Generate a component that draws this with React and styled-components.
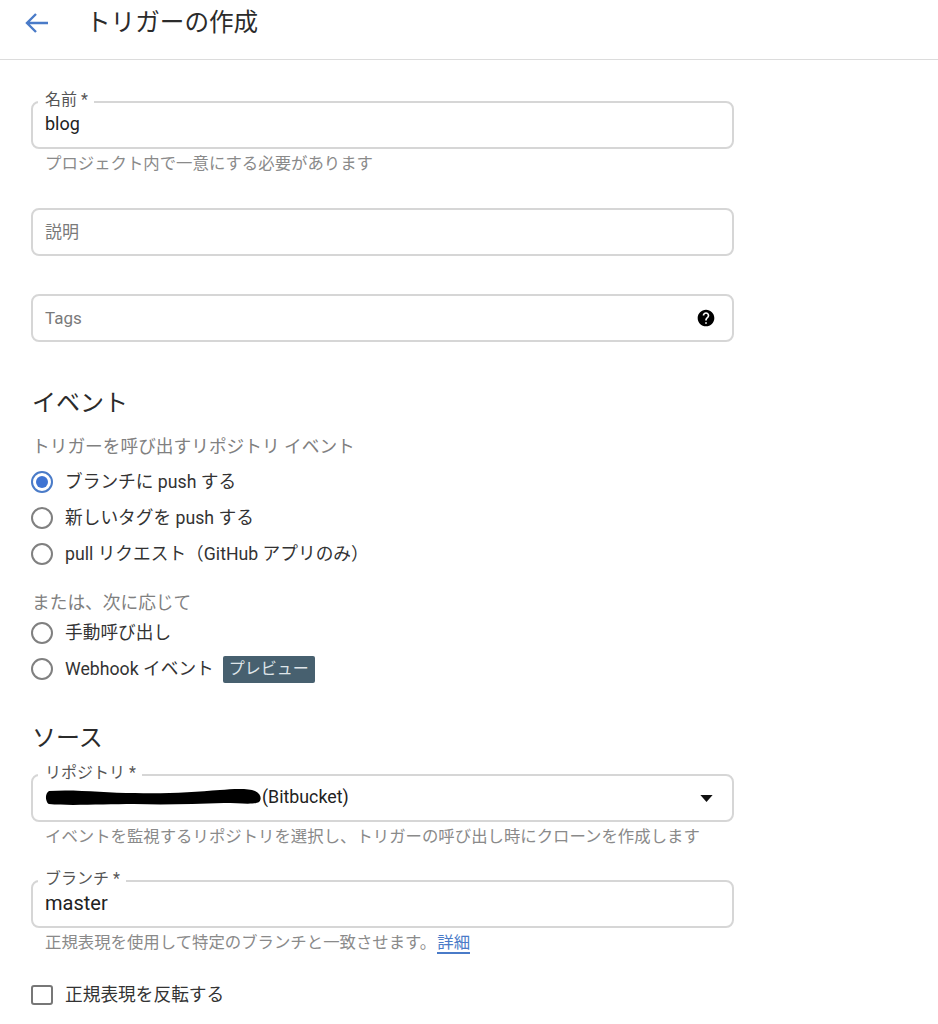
import styled, { createGlobalStyle } from "styled-components";

const GlobalStyle = createGlobalStyle`
  html, body {
    margin: 0;
    background: #fff;
    font-family: Roboto, "Noto Sans CJK JP", sans-serif;
    color: #202124;
  }
`;

const Page = styled.div`
  width: 938px;
  height: 1024px;
  overflow: hidden;
`;

const Header = styled.header`
  height: 60px;
  display: flex;
  align-items: center;
  padding: 0 0 14px 24px;
  box-sizing: border-box;
  border-bottom: 1px solid #dcdcdc;
`;

const BackButton = styled.button`
  width: 26px;
  height: 24px;
  padding: 0;
  border: none;
  background: none;
  color: #4a7bc8;
  display: flex;
  margin-right: 36px;
`;

const Title = styled.h1`
  margin: 0;
  font-size: 24.6px;
  font-weight: 400;
  line-height: 32px;
  color: #2b2b2b;
`;

const Content = styled.main`
  width: 703px;
  margin-left: 31px;
  padding-top: 41px;
`;

const Field = styled.div`
  position: relative;
  height: 48px;
  box-sizing: border-box;
  margin-top: ${({ $top }) => $top || 0}px;
  border: 2px solid #d6d6d6;
  border-radius: 8px;
  display: flex;
  align-items: center;
  justify-content: space-between;
  padding: 0 14px 0 12px;
`;

const FloatLabel = styled.label`
  position: absolute;
  top: -13px;
  left: 5px;
  padding: 0 6px 0 7px;
  background: #fff;
  font-size: 16px;
  line-height: 20px;
  color: #555;
`;

const Value = styled.span`
  display: flex;
  align-items: center;
  font-size: ${({ $size }) => $size}px;
  line-height: 24px;
  color: #222;
  margin-top: -2px;
`;

const Placeholder = styled.span`
  font-size: 17px;
  line-height: 24px;
  color: #7a7a7a;
`;

const Helper = styled.div`
  margin: 4px 0 0 14px;
  font-size: 16.4px;
  line-height: 22px;
  color: #8a8a8a;
`;

const DocLink = styled.a`
  color: #4a7bc8;
  border-bottom: 2px solid #4a7bc8;
  margin-left: 1px;
`;

const SectionTitle = styled.h2`
  margin: ${({ $top }) => $top}px 0 0 1px;
  font-size: 24px;
  font-weight: 400;
  line-height: 32px;
  color: #2b2b2b;
`;

const GroupLabel = styled.div`
  margin: ${({ $top }) => $top}px 0 0 1px;
  font-size: 17.7px;
  line-height: 22px;
  color: #808080;
`;

const OptionList = styled.div`
  display: flex;
  flex-direction: column;
  gap: 14px;
  margin-top: ${({ $top }) => $top}px;
`;

const Option = styled.div`
  display: flex;
  align-items: center;
  height: 22px;
  font-size: 17.7px;
  color: #333;
`;

const Radio = styled.span`
  width: 22px;
  height: 22px;
  box-sizing: border-box;
  border-radius: 50%;
  border: 2px solid ${({ $checked }) => ($checked ? "#4a7bc8" : "#808080")};
  margin-right: 12px;
  flex-shrink: 0;
  display: flex;
  align-items: center;
  justify-content: center;

  &::after {
    content: "";
    display: ${({ $checked }) => ($checked ? "block" : "none")};
    width: 12px;
    height: 12px;
    border-radius: 50%;
    background: #3f74d3;
  }
`;

const OptionText = styled.span`
  margin-top: -5px;
`;

const Badge = styled.span`
  margin-left: 9px;
  height: 27px;
  width: 92px;
  box-sizing: border-box;
  background: #47606f;
  border-radius: 2px;
  color: #dfe5e9;
  font-size: 16px;
  line-height: 25px;
  text-align: center;
`;

const CheckRow = styled(Option)`
  margin-top: 30px;
`;

const Checkbox = styled.span`
  width: 22px;
  height: 20px;
  box-sizing: border-box;
  border: 2px solid #777;
  border-radius: 3px;
  margin-right: 12px;
`;

const Redaction = styled.svg`
  width: 217px;
  height: 18px;
  flex-shrink: 0;
`;

const HelpSvg = styled.svg`
  margin-right: 2px;
`;

const CaretSvg = styled.svg`
  margin-right: 4px;
`;

const ArrowBack = () => (
  <svg width="26" height="24" viewBox="0 0 26 24" fill="none" stroke="currentColor" strokeWidth="2.4">
    <path d="M24 12H3M12 3l-9 9 9 9" />
  </svg>
);

const HelpIcon = () => (
  <HelpSvg width="20" height="20" viewBox="0 0 24 24">
    <path fill="#000" d="M12 2C6.48 2 2 6.48 2 12s4.48 10 10 10 10-4.48 10-10S17.52 2 12 2zm1 17h-2v-2h2v2zm2.07-7.75l-.9.92C13.45 12.9 13 13.5 13 15h-2v-.5c0-1.1.45-2.1 1.17-2.83l1.24-1.26c.37-.36.59-.86.59-1.41 0-1.1-.9-2-2-2s-2 .9-2 2H8c0-2.21 1.79-4 4-4s4 1.79 4 4c0 .88-.36 1.68-.93 2.25z" />
  </HelpSvg>
);

const Caret = () => (
  <CaretSvg width="15" height="7" viewBox="0 0 16 8">
    <path fill="#111" d="M1 0h14L8 8z" />
  </CaretSvg>
);

export default function App() {
  return (
    <Page>
      <GlobalStyle />
      <Header>
        <BackButton><ArrowBack /></BackButton>
        <Title>トリガーの作成</Title>
      </Header>
      <Content>
        <Field>
          <FloatLabel>名前 *</FloatLabel>
          <Value $size={18}>blog</Value>
        </Field>
        <Helper>プロジェクト内で一意にする必要があります</Helper>

        <Field $top={33}>
          <Placeholder>説明</Placeholder>
        </Field>

        <Field $top={38}>
          <Placeholder>Tags</Placeholder>
          <HelpIcon />
        </Field>

        <SectionTitle $top={45}>イベント</SectionTitle>
        <GroupLabel $top={17}>トリガーを呼び出すリポジトリ イベント</GroupLabel>
        <OptionList $top={13}>
          <Option><Radio $checked /><OptionText>ブランチに push する</OptionText></Option>
          <Option><Radio /><OptionText>新しいタグを push する</OptionText></Option>
          <Option><Radio /><OptionText>pull リクエスト（GitHub アプリのみ）</OptionText></Option>
        </OptionList>

        <GroupLabel $top={27}>または、次に応じて</GroupLabel>
        <OptionList $top={8}>
          <Option><Radio /><OptionText>手動呼び出し</OptionText></Option>
          <Option>
            <Radio />
            <OptionText>Webhook イベント</OptionText>
            <Badge>プレビュー</Badge>
          </Option>
        </OptionList>

        <SectionTitle $top={42}>ソース</SectionTitle>
        <Field $top={20}>
          <FloatLabel>リポジトリ *</FloatLabel>
          <Value $size={17.8}>
            <Redaction viewBox="0 0 217 18">
              <path fill="#000" d="M4 3C30 1 60 5 90 5c30 1 60-1 85-3 12-1 28-2 35 1 6 3 7 8 4 11-5 3-20 1-35 1-30 1-60 2-90 1-30 0-65 2-85 0C1 15-1 6 4 3z" />
            </Redaction>
            (Bitbucket)
          </Value>
          <Caret />
        </Field>
        <Helper>イベントを監視するリポジトリを選択し、トリガーの呼び出し時にクローンを作成します</Helper>

        <Field $top={32}>
          <FloatLabel>ブランチ *</FloatLabel>
          <Value $size={20}>master</Value>
        </Field>
        <Helper>
          正規表現を使用して特定のブランチと一致させます。
          <DocLink>詳細</DocLink>
        </Helper>

        <CheckRow>
          <Checkbox />
          <OptionText>正規表現を反転する</OptionText>
        </CheckRow>
      </Content>
    </Page>
  );
}
